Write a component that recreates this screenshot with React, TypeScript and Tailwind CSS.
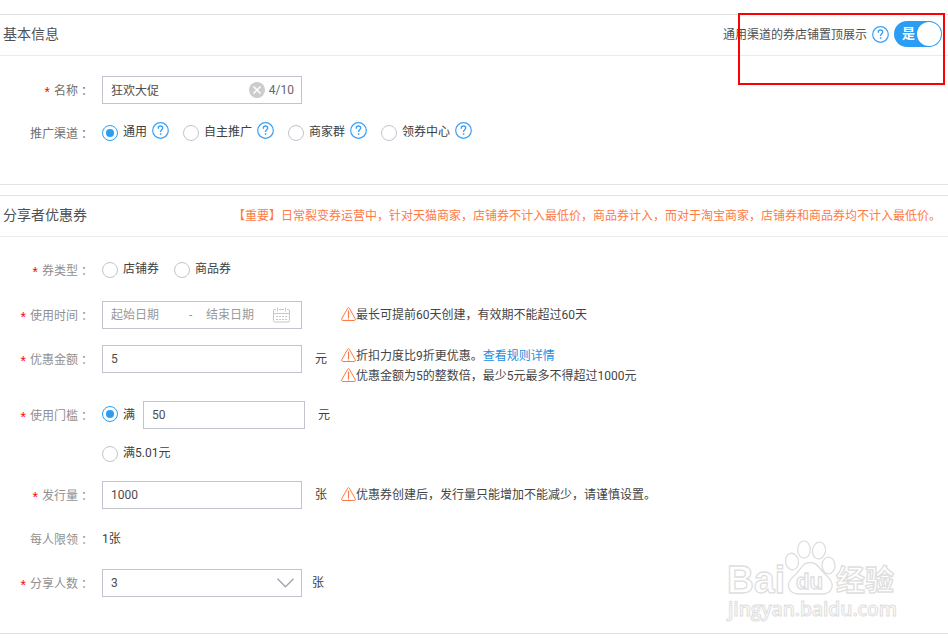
import type { ReactNode } from "react"

interface FieldProps {
  label: string
  required?: boolean
  dark?: boolean
  className?: string
  children: ReactNode
}

function Field({ label, required, dark, className = "", children }: FieldProps) {
  return (
    <div className={`flex h-7 items-center ${className}`}>
      <div className={`flex w-[90px] shrink-0 items-center justify-end pt-px ${dark ? "text-[#707070]" : "text-[#909090]"}`}>
        {required && <span className="mr-[4px] pt-[3px] font-['Liberation_Sans'] text-[14px] leading-[14px] text-[#f00]">*</span>}
        <span>{label}</span>
        <span className="font-['Noto_Sans_CJK_TC']">：</span>
      </div>
      <div className="ml-3 flex items-center">{children}</div>
    </div>
  )
}

function Radio({ checked }: { checked?: boolean }) {
  return (
    <span
      className={`flex size-4 shrink-0 items-center justify-center rounded-full border bg-white ${
        checked ? "border-[#2b9df4]" : "border-[#c3c3cf]"
      }`}
    >
      {checked && <span className="size-2 rounded-full bg-[#2b9df4]" />}
    </span>
  )
}

function HelpIcon() {
  return (
    <svg className="size-[17px] shrink-0" viewBox="0 0 17 17" fill="none" stroke="#3aa0f5">
      <circle cx="8.5" cy="8.5" r="7.8" strokeWidth="1.2" />
      <path d="M6.3 6.7V6.1a2.2 2.1 0 0 1 4.4 0c0 1.5-2.1 1.8-2.1 3.5v.4" strokeWidth="1.4" />
      <path d="M8.6 11.2v1.6" strokeWidth="1.5" />
    </svg>
  )
}

function WarnIcon() {
  return (
    <svg className="-mt-[2px] h-[14px] w-[15px] shrink-0" viewBox="0 0 15 14" fill="none" stroke="#ff7a45">
      <path d="M6.7 1.2Q7.5.1 8.3 1.2L14.2 11.6Q14.7 13.5 13.4 13.5H1.6Q.3 13.5.8 11.6Z" />
      <path d="M7.5 3.500v7.500" strokeWidth="1.2" />
      <path d="M7.5 11.500v1" />
    </svg>
  )
}

function CalendarIcon() {
  return (
    <svg className="h-4 w-[17px] shrink-0" viewBox="0 0 17 16" fill="none" stroke="#c8c8c8">
      <path d="M3 2.5H2Q.5 2.5.5 4v9.500Q.5 15 2 15h13q1.500 0 1.500-1.500V4q0-1.500-1.500-1.500h-1M6 2.500h5M.5 6.500h16" />
      <path d="M4.500.5v4M12.500.5v4" />
      <path d="M3 9.500h11M3 12.500h11" strokeDasharray="2 1" />
    </svg>
  )
}

function Hint({ children }: { children: ReactNode }) {
  return (
    <div className="flex h-5 items-center whitespace-nowrap text-[#444]">
      <WarnIcon />
      <span>{children}</span>
    </div>
  )
}

function TextBox({ className = "w-[200px]", children }: { className?: string; children: ReactNode }) {
  return (
    <div className={`flex h-7 shrink-0 items-center border border-[#c3c3cf] bg-white pl-2 text-[#4d4d4d] ${className}`}>
      {children}
    </div>
  )
}

function Watermark() {
  return (
    <svg
      className="absolute left-[725px] top-[538px] h-[92px] w-[178px]"
      viewBox="0 0 178 92"
      fill="#fff"
      stroke="#dedede"
      strokeWidth="1.3"
    >
      <ellipse cx="67" cy="23.500" rx="6.500" ry="8.300" transform="rotate(-10 67 23.500)" />
      <ellipse cx="79" cy="11.500" rx="6.300" ry="8.700" />
      <ellipse cx="94" cy="12.500" rx="6.500" ry="8.500" transform="rotate(10 94 12.500)" />
      <ellipse cx="103.500" cy="27.500" rx="6.500" ry="8.300" />
      <path d="M85 24.500C77 24.500 76 32 69 38C60 45 62 56 75 56H96C109 56 110 45 102 38C95 32 93 24.500 85 24.500Z" />
      <text x="2" y="54.500" fontSize="39" fontWeight="700" fontFamily="'Liberation Sans', Arial, sans-serif" textLength="58" lengthAdjust="spacingAndGlyphs">Bai</text>
      <text x="71" y="51" fontSize="22" fontWeight="700" fontFamily="'Liberation Sans', Arial, sans-serif" textLength="27" lengthAdjust="spacingAndGlyphs">du</text>
      <text x="111" y="53" fontSize="29" fontWeight="700" fontFamily="'Noto Sans CJK SC', sans-serif" textLength="58" lengthAdjust="spacingAndGlyphs">经验</text>
      <text x="3" y="77.500" fontSize="19" fontWeight="600" fontFamily="'Open Sans', sans-serif" textLength="169" lengthAdjust="spacingAndGlyphs" strokeWidth="1">jingyan.baidu.com</text>
    </svg>
  )
}

const channels = ["通用", "自主推广", "商家群", "领券中心"]

export default function App() {
  return (
    <div className="relative h-[642px] w-[948px] overflow-hidden bg-white pt-[14px] font-[Roboto,'Noto_Sans_CJK_SC',sans-serif] text-xs text-[#404040]">
      <section className="h-[171px] border-y border-[#e3e3e3]">
        <header className="flex h-[41px] items-center justify-between border-b border-[#ebebeb] pb-[2px] pl-[3px] pr-[6px]">
          <h2 className="text-sm text-[#505050]">基本信息</h2>
          <div className="flex items-center">
            <span className="pt-[2px] text-[#505050]">通用渠道的券店铺置顶展示</span>
            <span className="mx-[5px]">
              <HelpIcon />
            </span>
            <div className="flex h-[26px] w-12 items-center justify-between rounded-full bg-[#2b9df4] pl-2 pr-px">
              <span className="text-[13px] font-bold text-white">是</span>
              <span className="size-6 rounded-full bg-white" />
            </div>
          </div>
        </header>
        <Field label="名称" required dark className="mt-5">
          <TextBox>
            <span className="flex-1 pt-px">狂欢大促</span>
            <svg className="-mt-px mr-1 size-4" viewBox="0 0 16 16" fill="none">
              <circle cx="8" cy="8" r="8" fill="#ccc" />
              <path d="m4.500 4.500 7 7m0-7-7 7" stroke="#fff" strokeWidth="1.500" />
            </svg>
            <span className="mr-[7px] text-[#666]">4/10</span>
          </TextBox>
        </Field>
        <Field label="推广渠道" dark className="mt-[15px]">
          {channels.map((name, index) => (
            <div key={name} className="mr-[14px] flex items-center gap-[5px]">
              <Radio checked={index === 0} />
              <span className="-mt-[2px]">{name}</span>
              <span className="-mt-[5px]">
                <HelpIcon />
              </span>
            </div>
          ))}
        </Field>
      </section>

      <section className="mt-[10px] h-[439px] border-y border-[#e3e3e3]">
        <header className="flex h-[41px] items-center justify-between border-b border-[#ebebeb] pl-[3px] pr-[7px]">
          <h2 className="pb-[2px] text-sm text-[#505050]">分享者优惠券</h2>
          <p className="whitespace-nowrap text-[#ff7a45]">
            【重要】日常裂变券运营中，针对天猫商家，店铺券不计入最低价，商品券计入，而对于淘宝商家，店铺券和商品券均不计入最低价。
          </p>
        </header>
        <Field label="券类型" required className="mt-[19px]">
          <Radio />
          <span className="-mt-[2px] ml-[5px] mr-[15px]">店铺券</span>
          <Radio />
          <span className="-mt-[2px] ml-[5px]">商品券</span>
        </Field>
        <Field label="使用时间" required className="mt-[17px]">
          <TextBox>
            <span className="w-[78px] text-[#999]">起始日期</span>
            <span className="w-[17px] text-[#999]">-</span>
            <span className="w-[67px] text-[#999]">结束日期</span>
            <CalendarIcon />
          </TextBox>
          <div className="ml-[39px]">
            <Hint>最长可提前60天创建，有效期不能超过60天</Hint>
          </div>
        </Field>
        <Field label="优惠金额" required className="mt-4">
          <TextBox>5</TextBox>
          <span className="ml-[13px]">元</span>
          <div className="ml-[14px] pt-[13px]">
            <Hint>
              折扣力度比9折更优惠。<a className="text-[#1a8ee0]">查看规则详情</a>
            </Hint>
            <Hint>优惠金额为5的整数倍，最少5元最多不得超过1000元</Hint>
          </div>
        </Field>
        <Field label="使用门槛" required className="mt-7">
          <div className="-mt-[2px]">
            <Radio checked />
          </div>
          <span className="ml-[5px] mr-2">满</span>
          <TextBox className="w-[162px]">50</TextBox>
          <span className="ml-[13px]">元</span>
        </Field>
        <div className="ml-[102px] mt-[11px] flex h-7 items-center gap-[5px]">
          <Radio />
          <span className="-mt-[2px]">满5.01元</span>
        </div>
        <Field label="发行量" required className="mt-[13px]">
          <TextBox>1000</TextBox>
          <span className="ml-[13px] mr-[14px]">张</span>
          <Hint>优惠券创建后，发行量只能增加不能减少，请谨慎设置。</Hint>
        </Field>
        <Field label="每人限领" className="mt-4">
          1张
        </Field>
        <Field label="分享人数" required className="mt-4">
          <TextBox>
            <span className="flex-1">3</span>
            <svg className="mr-[7px] h-[10px] w-[17px]" viewBox="0 0 17 10" fill="none" stroke="#a5a5b5" strokeWidth="1.400">
              <path d="m.5.8 8 8 8-8" />
            </svg>
          </TextBox>
          <span className="-mt-px ml-[10px]">张</span>
        </Field>
      </section>

      {/* highlighted toggle area */}
      <div className="absolute left-[738px] top-[13px] h-[72px] w-[207px] border-2 border-[#f00]" />
      <Watermark />
    </div>
  )
}
